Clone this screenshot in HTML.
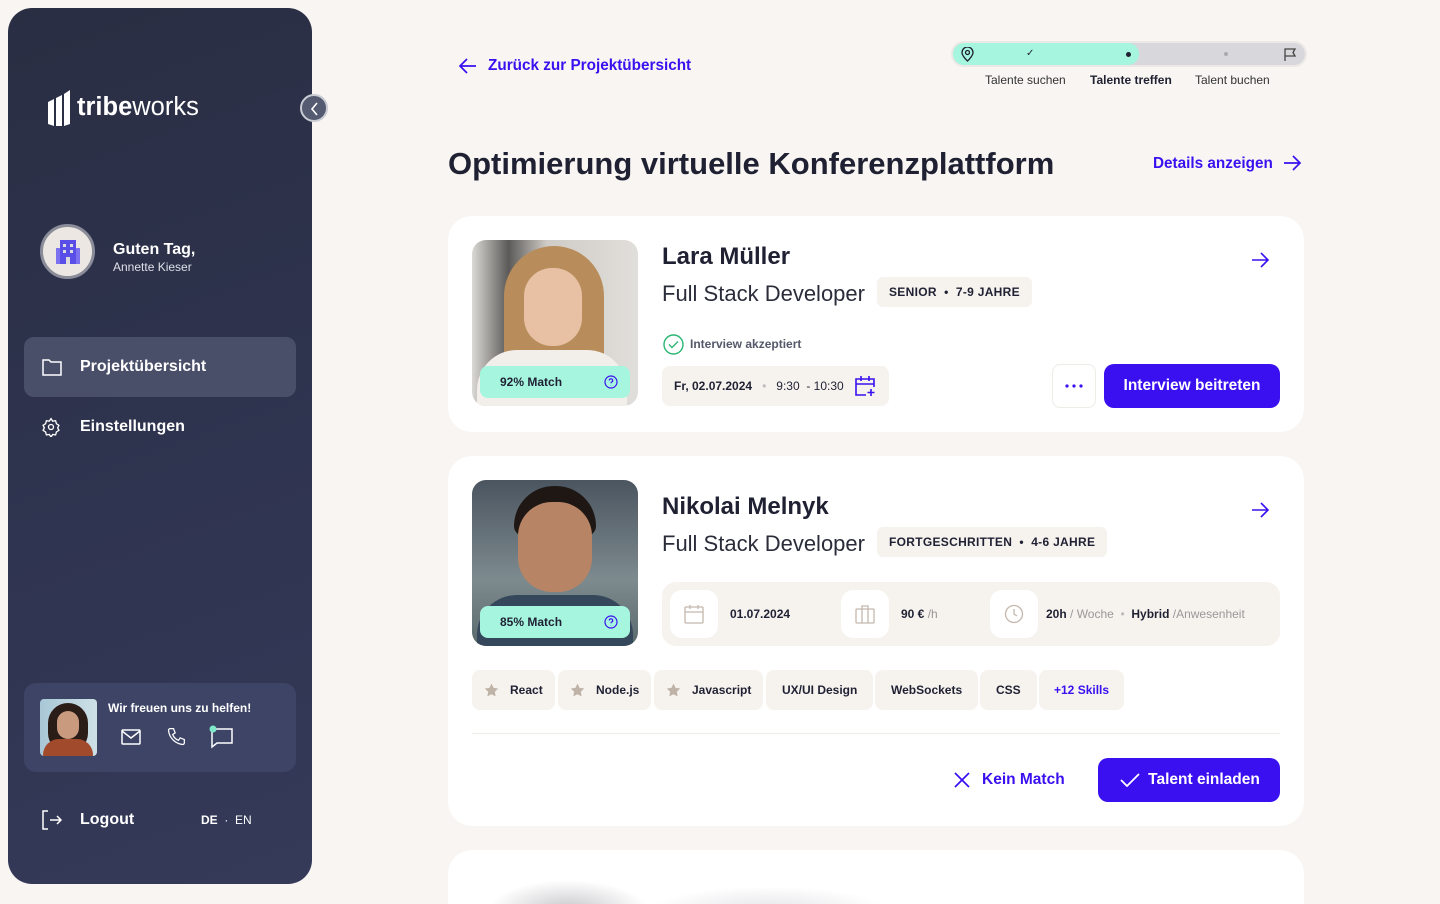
<!DOCTYPE html>
<html><head><meta charset="utf-8"><style>
*{box-sizing:border-box;margin:0;padding:0}
html{width:1440px;height:904px;overflow:hidden}
body{width:1440px;height:904px;overflow:hidden;background:#f8f5f2;font-family:"Liberation Sans",sans-serif;color:#1f2133;position:relative}
.sb{position:absolute;left:8px;top:8px;width:304px;height:876px;border-radius:24px;background:linear-gradient(160deg,#2a2e43 0%,#2f3450 55%,#343a58 100%)}
.abs{position:absolute}
.w{color:#fff}
.card{position:absolute;left:448px;width:856px;background:#fff;border-radius:24px}
.photo{position:absolute;left:24px;top:24px;width:166px;height:166px;border-radius:14px;overflow:hidden}
.match{position:absolute;left:8px;bottom:8px;width:150px;height:32px;border-radius:8px;background:#a6f6df;font-size:12px;font-weight:bold;line-height:32px;padding-left:20px;color:#1f2133}
.match svg{position:absolute;right:12px;top:9px}
.name{position:absolute;left:214px;font-size:24px;font-weight:bold}
.role{position:absolute;left:214px;font-size:22px;color:#2a2c3a}
.tag{position:absolute;height:30px;border-radius:6px;background:#f6f2ee;font-size:12px;font-weight:bold;letter-spacing:.3px;line-height:30px;padding:0 12px}
.chip{position:absolute;top:214px;height:40px;border-radius:8px;background:#f6f2ee;font-size:12px;font-weight:bold;line-height:40px;padding:0 12px}
.btn{position:absolute;background:#3a10f0;color:#fff;font-weight:bold;font-size:16px;border-radius:10px;text-align:center}
</style></head><body>
<div class="sb">
 <svg class="abs" style="left:38px;top:80px" width="26" height="40" viewBox="0 0 26 40"><path d="M2 14 L8 11 V38 L2 36Z M10 10 L16 7 V38 L10 38Z M18 6 L24 2 V36 L18 38Z" fill="#fff"/></svg>
 <div class="abs w" style="left:69px;top:85px;font-size:25.5px"><b>tribe</b>works</div>
 <div class="abs" style="left:32px;top:216px;width:55px;height:55px;border-radius:50%;border:3px solid #8a8c99;background:#ece7e2"><svg style="position:absolute;left:13px;top:11px" width="24" height="28" viewBox="0 0 24 28"><rect x="4" y="2" width="16" height="24" fill="#5a4ee8"/><rect x="0" y="10" width="4" height="16" fill="#7c72ef"/><rect x="20" y="10" width="4" height="16" fill="#7c72ef"/><g fill="#ddd"><rect x="7" y="6" width="3" height="3"/><rect x="14" y="6" width="3" height="3"/><rect x="7" y="12" width="3" height="3"/><rect x="14" y="12" width="3" height="3"/><rect x="10" y="19" width="4" height="7"/></g></svg></div>
 <div class="abs w" style="left:105px;top:233px;font-size:16px;font-weight:bold">Guten Tag,</div>
 <div class="abs" style="left:105px;top:252px;font-size:12px;color:#dfe0e8">Annette Kieser</div>
 <div class="abs" style="left:16px;top:329px;width:272px;height:60px;border-radius:10px;background:#4a4f69"></div>
 <svg class="abs" style="left:33px;top:349px" width="22" height="20" viewBox="0 0 22 20" fill="none" stroke="#fff" stroke-width="1.5"><path d="M2 3h6l2 2h10v13H2z"/></svg>
 <div class="abs w" style="left:72px;top:350px;font-size:16px;font-weight:bold">Projektübersicht</div>
 <svg class="abs" style="left:33px;top:409px" width="20" height="20" viewBox="0 0 24 24" fill="none" stroke="#fff" stroke-width="1.6"><circle cx="12" cy="12" r="3"/><path d="M12 2l2 3 3.5-.5 1 3.5 3 2-1.5 3 1.5 3-3 2-1 3.5-3.5-.5-2 3-2-3-3.5.5-1-3.5-3-2 1.5-3-1.5-3 3-2 1-3.5 3.5.5z"/></svg>
 <div class="abs w" style="left:72px;top:410px;font-size:16px;font-weight:bold">Einstellungen</div>
 <div class="abs" style="left:16px;top:675px;width:272px;height:89px;border-radius:12px;background:#3d4466"></div>
 <div class="abs" style="left:32px;top:691px;width:57px;height:57px;border-radius:4px;overflow:hidden;background:linear-gradient(90deg,#a8c7d6,#cde0e6)"><div style="position:absolute;left:8px;top:4px;width:40px;height:50px;border-radius:20px;background:#2a1d18"></div><div style="position:absolute;left:17px;top:12px;width:22px;height:28px;border-radius:11px;background:#c99a7e"></div><div style="position:absolute;left:3px;top:40px;width:50px;height:30px;border-radius:16px 16px 0 0;background:#a24a2c"></div></div>
 <div class="abs w" style="left:100px;top:693px;font-size:12px;font-weight:bold">Wir freuen uns zu helfen!</div>
 <svg class="abs" style="left:113px;top:720px" width="20" height="18" viewBox="0 0 20 18" fill="none" stroke="#fff" stroke-width="1.5"><rect x="1" y="2" width="18" height="14" rx="1"/><path d="M1 3l9 7 9-7"/></svg>
 <svg class="abs" style="left:158px;top:719px" width="20" height="20" viewBox="0 0 24 24" fill="none" stroke="#fff" stroke-width="1.5"><path d="M5 2h4l2 5-3 2a12 12 0 0 0 7 7l2-3 5 2v4a2 2 0 0 1-2 2A19 19 0 0 1 3 4a2 2 0 0 1 2-2z"/></svg>
 <svg class="abs" style="left:200px;top:717px" width="26" height="24" viewBox="0 0 26 24" fill="none" stroke="#fff" stroke-width="1.5"><path d="M4 4h20v14H9l-5 4z"/><circle cx="5" cy="4" r="3.5" fill="#7ee8c9" stroke="none"/></svg>
 <svg class="abs" style="left:32px;top:800px" width="24" height="24" viewBox="0 0 24 24" fill="none" stroke="#fff" stroke-width="1.5"><path d="M8 3H3v18h5M10 12h11M17 8l4 4-4 4"/></svg>
 <div class="abs w" style="left:72px;top:803px;font-size:16px;font-weight:bold">Logout</div>
 <div class="abs w" style="left:193px;top:805px;font-size:12px"><b>DE</b> &nbsp;·&nbsp; EN</div>
</div>
<div class="abs" style="left:300px;top:94px;width:28px;height:28px;border-radius:50%;background:#555b70;border:2px solid #c9cbd3"><svg style="position:absolute;left:7px;top:6px" width="12" height="14" viewBox="0 0 12 14" fill="none" stroke="#fff" stroke-width="1.6"><path d="M8 1L3 7l5 6"/></svg></div>

<svg class="abs" style="left:458px;top:57px" width="20" height="18" viewBox="0 0 20 18" fill="none" stroke="#3a10f0" stroke-width="1.7"><path d="M18 9H2M9 2L2 9l7 7"/></svg>
<div class="abs" style="left:488px;top:57px;font-size:15.3px;font-weight:bold;color:#3a10f0">Zurück zur Projektübersicht</div>

<div class="abs" style="left:951px;top:41px;width:356px;height:26px;border-radius:13px;background:#d8d8dc;border:2px solid #ebe8e5"></div>
<div class="abs" style="left:953px;top:43px;width:186px;height:22px;border-radius:11px;background:#a6f6df"></div>
<svg class="abs" style="left:961px;top:47px" width="13" height="15" viewBox="0 0 13 15" fill="none" stroke="#1f2133" stroke-width="1.3"><path d="M6.5 14S1 9 1 5.5a5.5 5.5 0 0 1 11 0C12 9 6.5 14 6.5 14z"/><circle cx="6.5" cy="5.5" r="2"/></svg>
<div class="abs" style="left:1026px;top:48px;font-size:10px">✓</div>
<div class="abs" style="left:1126px;top:52px;width:5px;height:5px;border-radius:50%;background:#1f2133"></div>
<div class="abs" style="left:1224px;top:52px;width:4px;height:4px;border-radius:50%;background:#a8a8b0"></div>
<svg class="abs" style="left:1283px;top:47px" width="14" height="15" viewBox="0 0 14 15" fill="none" stroke="#444" stroke-width="1.3"><path d="M2 14V2h10l-2 3.5 2 3.5H2"/></svg>
<div class="abs" style="left:985px;top:73px;font-size:12px;color:#333">Talente suchen</div>
<div class="abs" style="left:1090px;top:73px;font-size:12px;font-weight:bold">Talente treffen</div>
<div class="abs" style="left:1195px;top:73px;font-size:12px;color:#333">Talent buchen</div>

<div class="abs" style="left:448px;top:146px;font-size:31px;font-weight:bold;color:#1f2133">Optimierung virtuelle Konferenzplattform</div>
<div class="abs" style="left:1153px;top:155px;font-size:15.3px;font-weight:bold;color:#3a10f0">Details anzeigen</div>
<svg class="abs" style="left:1282px;top:154px" width="20" height="18" viewBox="0 0 20 18" fill="none" stroke="#3a10f0" stroke-width="1.7"><path d="M2 9h16M11 2l7 7-7 7"/></svg>

<div class="card" style="top:216px;height:216px">
 <div class="photo" style="background:linear-gradient(90deg,#dad9d5 0%,#5b5a58 22%,#cfcbc6 45%,#e1dfdb 100%)">
  <div style="position:absolute;left:32px;top:6px;width:100px;height:140px;border-radius:50px 50px 10px 10px;background:#b88d5b"></div>
  <div style="position:absolute;left:52px;top:28px;width:58px;height:78px;border-radius:28px;background:#e8c1a4"></div>
  <div style="position:absolute;left:5px;top:110px;width:150px;height:70px;border-radius:40px 40px 0 0;background:#f2efeb"></div>
  <div class="match">92% Match<svg width="14" height="14" viewBox="0 0 14 14" fill="none" stroke="#3a10f0" stroke-width="1.2"><circle cx="7" cy="7" r="6"/><path d="M5.3 5.5a1.7 1.7 0 1 1 2.3 1.6c-.5.2-.6.6-.6 1.1M7 10v.3"/></svg></div>
 </div>
 <div class="name" style="top:27px">Lara Müller</div>
 <div class="role" style="top:65px">Full Stack Developer</div>
 <div class="tag" style="left:429px;top:61px">SENIOR &nbsp;•&nbsp; 7-9 JAHRE</div>
 <svg class="abs" style="left:802px;top:35px" width="20" height="18" viewBox="0 0 20 18" fill="none" stroke="#3a10f0" stroke-width="1.6"><path d="M2 9h16M11 2l7 7-7 7"/></svg>
 <svg class="abs" style="left:215px;top:118px" width="21" height="21" viewBox="0 0 21 21" fill="none" stroke="#2bb673" stroke-width="1.4"><circle cx="10.5" cy="10.5" r="9.5"/><path d="M6 10.5l3 3 6-6"/></svg>
 <div class="abs" style="left:242px;top:121px;font-size:12px;font-weight:bold;color:#55586a">Interview akzeptiert</div>
 <div class="abs" style="left:214px;top:150px;width:227px;height:40px;border-radius:8px;background:#f6f2ee;font-size:12px;line-height:40px;padding-left:12px"><b>Fr, 02.07.2024</b> &nbsp; <span style="color:#bbb">•</span> &nbsp; 9:30 &nbsp;- 10:30</div>
 <svg class="abs" style="left:406px;top:159px" width="22" height="22" viewBox="0 0 22 22" fill="none" stroke="#3a10f0" stroke-width="1.6"><path d="M12 20H2V4h18v8M2 9h18M7 1v5M15 1v5M17 14v7M13.5 17.5h7"/></svg>
 <div class="abs" style="left:604px;top:148px;width:44px;height:44px;border-radius:8px;border:1.5px solid #efebe7"><svg style="position:absolute;left:12px;top:19px" width="18" height="4"><circle cx="2" cy="2" r="1.6" fill="#3a10f0"/><circle cx="9" cy="2" r="1.6" fill="#3a10f0"/><circle cx="16" cy="2" r="1.6" fill="#3a10f0"/></svg></div>
 <div class="btn" style="left:656px;top:148px;width:176px;height:44px;line-height:44px;font-size:15.5px">Interview beitreten</div>
</div>

<div class="card" style="top:456px;height:370px">
 <div class="photo" style="background:linear-gradient(180deg,#4b5560,#7d8a8e 60%,#5a6a6d)">
  <div style="position:absolute;left:42px;top:6px;width:82px;height:50px;border-radius:40px 40px 10px 10px;background:#1e1714"></div>
  <div style="position:absolute;left:46px;top:22px;width:74px;height:90px;border-radius:34px;background:#b88466"></div>
  <div style="position:absolute;left:5px;top:115px;width:156px;height:70px;border-radius:40px 40px 0 0;background:#35475a"></div>
  <div class="match">85% Match<svg width="14" height="14" viewBox="0 0 14 14" fill="none" stroke="#3a10f0" stroke-width="1.2"><circle cx="7" cy="7" r="6"/><path d="M5.3 5.5a1.7 1.7 0 1 1 2.3 1.6c-.5.2-.6.6-.6 1.1M7 10v.3"/></svg></div>
 </div>
 <div class="name" style="top:37px">Nikolai Melnyk</div>
 <div class="role" style="top:75px">Full Stack Developer</div>
 <div class="tag" style="left:429px;top:71px">FORTGESCHRITTEN &nbsp;•&nbsp; 4-6 JAHRE</div>
 <svg class="abs" style="left:802px;top:45px" width="20" height="18" viewBox="0 0 20 18" fill="none" stroke="#3a10f0" stroke-width="1.6"><path d="M2 9h16M11 2l7 7-7 7"/></svg>
 <div class="abs" style="left:214px;top:126px;width:618px;height:64px;border-radius:14px;background:#f6f2ee"></div>
 <div class="abs" style="left:222px;top:134px;width:48px;height:48px;border-radius:12px;background:#fff"></div>
 <svg class="abs" style="left:236px;top:148px" width="20" height="20" viewBox="0 0 20 20" fill="none" stroke="#c4b8ae" stroke-width="1.3"><rect x="1" y="3" width="18" height="16" rx="1"/><path d="M1 8h18M6 1v4M14 1v4"/></svg>
 <div class="abs" style="left:282px;top:151px;font-size:12px;font-weight:bold">01.07.2024</div>
 <div class="abs" style="left:393px;top:134px;width:48px;height:48px;border-radius:12px;background:#fff"></div>
 <svg class="abs" style="left:407px;top:148px" width="20" height="20" viewBox="0 0 20 20" fill="none" stroke="#c4b8ae" stroke-width="1.3"><rect x="1" y="5" width="18" height="14" rx="1"/><path d="M7 5V2h6v3M7 5v14M13 5v14"/></svg>
 <div class="abs" style="left:453px;top:151px;font-size:12px"><b>90 €</b> <span style="color:#999">/h</span></div>
 <div class="abs" style="left:542px;top:134px;width:48px;height:48px;border-radius:12px;background:#fff"></div>
 <svg class="abs" style="left:556px;top:148px" width="20" height="20" viewBox="0 0 20 20" fill="none" stroke="#c4b8ae" stroke-width="1.3"><circle cx="10" cy="10" r="8.5"/><path d="M10 5v5l3 2"/></svg>
 <div class="abs" style="left:598px;top:151px;font-size:12px"><b>20h</b> <span style="color:#999">/ Woche</span> &nbsp;<span style="color:#bbb">•</span>&nbsp; <b>Hybrid</b> <span style="color:#999">/Anwesenheit</span></div>
 <div class="chip" style="left:24px;padding-left:38px">React</div>
 <div class="chip" style="left:110px;padding-left:38px">Node.js</div>
 <div class="chip" style="left:206px;padding-left:38px">Javascript</div>
 <svg class="abs" style="left:36px;top:227px" width="15" height="14" viewBox="0 0 24 23"><path d="M12 1l3.4 7 7.6 1-5.5 5.3 1.3 7.7L12 18.4 5.2 22l1.3-7.7L1 9l7.6-1z" fill="#bfb3a8"/></svg>
 <svg class="abs" style="left:122px;top:227px" width="15" height="14" viewBox="0 0 24 23"><path d="M12 1l3.4 7 7.6 1-5.5 5.3 1.3 7.7L12 18.4 5.2 22l1.3-7.7L1 9l7.6-1z" fill="#bfb3a8"/></svg>
 <svg class="abs" style="left:218px;top:227px" width="15" height="14" viewBox="0 0 24 23"><path d="M12 1l3.4 7 7.6 1-5.5 5.3 1.3 7.7L12 18.4 5.2 22l1.3-7.7L1 9l7.6-1z" fill="#bfb3a8"/></svg>
 <div class="chip" style="left:318px;padding:0 16px">UX/UI Design</div>
 <div class="chip" style="left:427px;padding:0 16px">WebSockets</div>
 <div class="chip" style="left:532px;padding:0 16px">CSS</div>
 <div class="chip" style="left:591px;padding:0 15px;color:#3a10f0">+12 Skills</div>
 <div class="abs" style="left:24px;top:277px;width:808px;height:1px;background:#efebe7"></div>
 <svg class="abs" style="left:505px;top:315px" width="18" height="18" viewBox="0 0 18 18" fill="none" stroke="#3a10f0" stroke-width="1.7"><path d="M2 2l14 14M16 2L2 16"/></svg>
 <div class="abs" style="left:534px;top:315px;font-size:15.5px;font-weight:bold;color:#3a10f0">Kein Match</div>
 <div class="btn" style="left:650px;top:302px;width:182px;height:44px;line-height:44px;padding-left:30px;font-size:15.5px">Talent einladen</div>
 <svg class="abs" style="left:672px;top:317px" width="20" height="14" viewBox="0 0 20 14" fill="none" stroke="#fff" stroke-width="1.8"><path d="M1 7l6 6L19 1"/></svg>
</div>

<div class="card" style="top:850px;height:54px;overflow:hidden;border-radius:24px 24px 0 0">
 <div style="position:absolute;left:40px;top:30px;width:160px;height:60px;border-radius:50%;background:radial-gradient(ellipse,#c8c8cc,rgba(255,255,255,0) 70%)"></div>
 <div style="position:absolute;left:200px;top:36px;width:240px;height:50px;border-radius:50%;background:radial-gradient(ellipse,#e4e4e8,rgba(255,255,255,0) 70%)"></div>
</div>
</body></html>
